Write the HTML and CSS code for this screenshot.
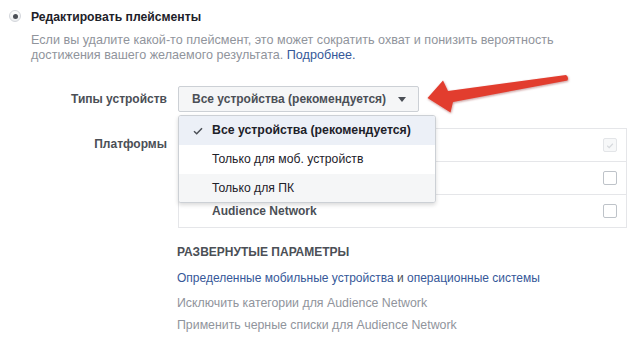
FILE: index.html
```html
<!DOCTYPE html>
<html lang="ru">
<head>
<meta charset="utf-8">
<title>Плейсменты</title>
<link rel="stylesheet" href="styles.css">
</head>
<body>
<div class="page">
  <div class="option">
    <span class="radio"><span class="radio-dot"></span></span>
    <div class="option-body">
      <div class="option-title">Редактировать плейсменты</div>
      <p class="desc">Если вы удалите какой-то плейсмент, это может сократить охват и понизить вероятность достижения вашего желаемого результата. <a class="link">Подробнее.</a></p>
    </div>
  </div>

  <div class="form">
    <div class="label label-devices">Типы устройств</div>
    <div class="field">
      <div class="select">Все устройства (рекомендуется)<span class="caret"></span></div>
    </div>

    <div class="label label-platforms">Платформы</div>
    <div class="field">
      <div class="platforms">
        <div class="platform-row"><span class="platform-name">Facebook</span><span class="checkbox checkbox-disabled"><svg viewBox="0 0 13 13" width="13" height="13"><path d="M3.5 6.8 L5.6 8.8 L9.6 4.6" fill="none" stroke="#d6d9dd" stroke-width="1.3"/></svg></span></div>
        <div class="platform-row"><span class="platform-name">Instagram</span><span class="checkbox"></span></div>
        <div class="platform-row"><span class="platform-name">Audience Network</span><span class="checkbox"></span></div>
      </div>
    </div>
  </div>

  <div class="advanced">
    <div class="advanced-title">РАЗВЕРНУТЫЕ ПАРАМЕТРЫ</div>
    <div class="adv-link adv-primary"><a class="link">Определенные мобильные устройства</a> и <a class="link">операционные системы</a></div>
    <div class="adv-link adv-muted adv-first">Исключить категории для Audience Network</div>
    <div class="adv-link adv-muted adv-second">Применить черные списки для Audience Network</div>
  </div>

  <ul class="menu">
    <li class="menu-item menu-selected"><svg class="menu-check" viewBox="0 0 10 8" width="10" height="8"><path d="M1 4.2 L3.7 6.7 L9 1.2" fill="none" stroke="#4b4f56" stroke-width="1.5"/></svg>Все устройства (рекомендуется)</li>
    <li class="menu-item">Только для моб. устройств</li>
    <li class="menu-item menu-hover">Только для ПК</li>
  </ul>

  <svg class="arrow" viewBox="418 70 160 50" width="160" height="50">
    <defs>
      <filter id="sh" x="-10%" y="-30%" width="120%" height="160%">
        <feDropShadow dx="0.5" dy="1" stdDeviation="0.8" flood-color="#7a1a12" flood-opacity="0.45"/>
      </filter>
    </defs>
    <path d="M427.5 98 L443 80.5 L448 91 L566 75 Q569 77 567.5 80.5 L453 102 L450.5 112.5 Z" fill="#e23c2f" filter="url(#sh)"/>
  </svg>
</div>
</body>
</html>
```

FILE: styles.css
```css
* { box-sizing: border-box; }

html, body {
  margin: 0;
  padding: 0;
  background: #ffffff;
}

body {
  font-family: "Liberation Sans", Arial, Helvetica, sans-serif;
  font-size: 12px;
  color: #1d2129;
  width: 639px;
  height: 360px;
  overflow: hidden;
}

.page {
  position: relative;
  padding: 9px 12px 0 9px;
}

.option {
  display: flex;
  gap: 10px;
}

.radio {
  flex: none;
  width: 12px;
  height: 12px;
  margin-top: 1px;
  border-radius: 50%;
  border: 1px solid #d3d6db;
  background: linear-gradient(#ffffff, #eceef0);
  display: flex;
  align-items: center;
  justify-content: center;
}

.radio-dot {
  width: 5px;
  height: 5px;
  border-radius: 50%;
  background: #4b4f56;
}

.option-title {
  font-weight: bold;
  font-size: 12.2px;
  line-height: 16px;
  color: #1d2129;
}

.desc {
  margin: 8px 0 0;
  width: 560px;
  font-size: 12.6px;
  line-height: 15px;
  color: #90949c;
}

.link {
  color: #365899;
  text-decoration: none;
}

.form {
  margin-top: 23px;
  margin-left: -9px;
  display: grid;
  grid-template-columns: 167px 449px;
  column-gap: 11px;
  row-gap: 16px;
}

.label {
  text-align: right;
  font-weight: bold;
  color: #4b4f56;
  line-height: 16px;
}

.label-devices {
  align-self: center;
}

.label-platforms {
  padding-top: 8px;
}

.select {
  display: inline-flex;
  align-items: center;
  height: 26px;
  width: 241px;
  padding: 0 0 0 13px;
  border: 1px solid #ccd0d5;
  border-radius: 2px;
  background: #f5f6f7;
  font-weight: bold;
  color: #4b4f56;
}

.caret {
  margin-left: 12px;
  width: 0;
  height: 0;
  border-left: 4px solid transparent;
  border-right: 4px solid transparent;
  border-top: 5px solid #4b4f56;
}

.platforms {
  border: 1px solid #e5e6e9;
}

.platform-row {
  height: 33px;
  display: flex;
  align-items: center;
  justify-content: space-between;
  padding: 0 9px 0 33px;
  border-top: 1px solid #e5e6e9;
}

.platform-row:first-child {
  border-top: none;
  height: 32px;
}

.platform-name {
  font-weight: bold;
  color: #4b4f56;
}

.checkbox {
  width: 14px;
  height: 14px;
  border: 1px solid #bec3c9;
  border-radius: 2px;
  background: #ffffff;
  display: flex;
}

.checkbox-disabled {
  border-color: #e3e5e8;
  background: #f7f8f9;
}

.advanced {
  margin: 16px 0 0 168px;
}

.advanced-title {
  font-weight: bold;
  line-height: 16px;
  color: #4b4f56;
}

.adv-link {
  line-height: 16px;
}

.adv-primary {
  margin-top: 10px;
  color: #4b4f56;
}

.adv-muted {
  font-size: 12.35px;
  color: #90949c;
}

.adv-first {
  margin-top: 9px;
}

.adv-second {
  margin-top: 6px;
}

.menu {
  position: absolute;
  left: 178px;
  top: 115px;
  width: 258px;
  margin: 0;
  padding: 0;
  list-style: none;
  background: #ffffff;
  border: 1px solid #ccd0d5;
  border-radius: 3px;
  box-shadow: 0 2px 4px rgba(0, 0, 0, 0.15);
  overflow: hidden;
}

.menu-item {
  position: relative;
  height: 29px;
  line-height: 29px;
  padding-left: 33px;
  font-size: 12.2px;
  color: #1d2129;
}

.menu-item:last-child {
  height: 28px;
}

.menu-selected {
  background: #ecf0f7;
  font-weight: bold;
  font-size: 12.3px;
}

.menu-hover {
  background: #f5f6f7;
}

.menu-check {
  position: absolute;
  left: 14px;
  top: 11px;
}

.arrow {
  position: absolute;
  left: 418px;
  top: 70px;
  overflow: visible;
}
```
